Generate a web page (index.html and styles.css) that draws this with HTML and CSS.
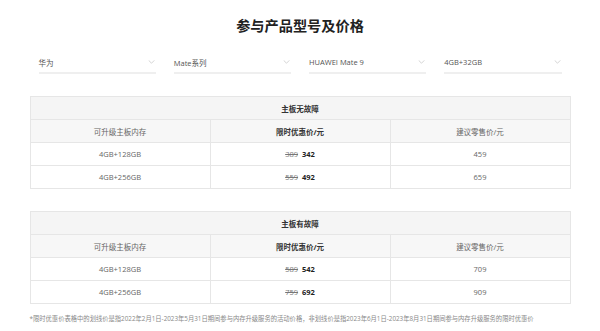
FILE: index.html
```html
<!DOCTYPE html>
<html lang="zh-CN">
<head>
<meta charset="utf-8">
<title>参与产品型号及价格</title>
<link rel="stylesheet" href="styles.css">
</head>
<body>
<div class="page">
  <h1 class="title">参与产品型号及价格</h1>
  <div class="selects">
    <div class="select"><span>华为</span><svg class="chev" viewBox="0 0 8 5" width="8" height="5"><path d="M0.5 0.5 L4 4 L7.5 0.5" fill="none" stroke="#bbb" stroke-width="0.8"/></svg></div>
    <div class="select"><span>Mate系列</span><svg class="chev" viewBox="0 0 8 5" width="8" height="5"><path d="M0.5 0.5 L4 4 L7.5 0.5" fill="none" stroke="#bbb" stroke-width="0.8"/></svg></div>
    <div class="select"><span>HUAWEI Mate 9</span><svg class="chev" viewBox="0 0 8 5" width="8" height="5"><path d="M0.5 0.5 L4 4 L7.5 0.5" fill="none" stroke="#bbb" stroke-width="0.8"/></svg></div>
    <div class="select"><span>4GB+32GB</span><svg class="chev" viewBox="0 0 8 5" width="8" height="5"><path d="M0.5 0.5 L4 4 L7.5 0.5" fill="none" stroke="#bbb" stroke-width="0.8"/></svg></div>
  </div>

  <table class="price">
    <tr class="cap"><th colspan="3">主板无故障</th></tr>
    <tr class="head"><td>可升级主板内存</td><td class="b">限时优惠价/元</td><td>建议零售价/元</td></tr>
    <tr><td>4GB+128GB</td><td><s>389</s> <b>342</b></td><td>459</td></tr>
    <tr><td>4GB+256GB</td><td><s>559</s> <b>492</b></td><td>659</td></tr>
  </table>

  <table class="price">
    <tr class="cap"><th colspan="3">主板有故障</th></tr>
    <tr class="head"><td>可升级主板内存</td><td class="b">限时优惠价/元</td><td>建议零售价/元</td></tr>
    <tr><td>4GB+128GB</td><td><s>589</s> <b>542</b></td><td>709</td></tr>
    <tr><td>4GB+256GB</td><td><s>759</s> <b>692</b></td><td>909</td></tr>
  </table>

  <p class="note">*限时优惠价表格中的划线价是指2022年2月1日-2023年5月31日期间参与内存升级服务的活动价格，非划线价是指2023年6月1日-2023年8月31日期间参与内存升级服务的限时优惠价</p>
</div>
</body>
</html>
```

FILE: styles.css
```css
html, body {
  margin: 0;
  padding: 0;
  background: #fff;
}
body {
  font-family: "Open Sans", "Noto Sans CJK SC", sans-serif;
  color: #666;
}
.page {
  width: 541px;
  margin: 0 auto;
  padding-top: 15px;
}
.title {
  margin: 0;
  font-family: "Noto Sans CJK SC", sans-serif;
  font-size: 14.2px;
  line-height: 20px;
  font-weight: 700;
  color: #222;
  text-align: center;
}
.selects {
  display: flex;
  gap: 18px;
  margin: 17px 9px 0;
}
.select {
  flex: 1;
  height: 20px;
  border-bottom: 2px solid #efefef;
  display: flex;
  align-items: center;
  justify-content: space-between;
  font-size: 7.5px;
  color: #555;
  padding-right: 1px;
}
.chev {
  display: block;
  width: 7px;
  height: 4px;
}
.price {
  width: 541px;
  border-collapse: collapse;
  table-layout: fixed;
  margin-top: 22px;
  font-size: 7.5px;
}
.price th,
.price td {
  border: 1px solid #e6e6e6;
  height: 22px;
  padding: 0;
  text-align: center;
  vertical-align: middle;
  font-weight: 400;
  color: #666;
}
.price .cap th {
  background: #f5f5f5;
  font-weight: 700;
  color: #333;
}
.price .head td {
  background: #f7f7f7;
}
.price .head td.b {
  font-weight: 700;
  color: #333;
}
.price s {
  color: #777;
}
.price b {
  font-weight: 700;
  color: #222;
  margin-left: 2px;
}
.note {
  margin: 10px 0 0;
  font-size: 6.3px;
  line-height: 10px;
  color: #888;
  white-space: nowrap;
}
```
